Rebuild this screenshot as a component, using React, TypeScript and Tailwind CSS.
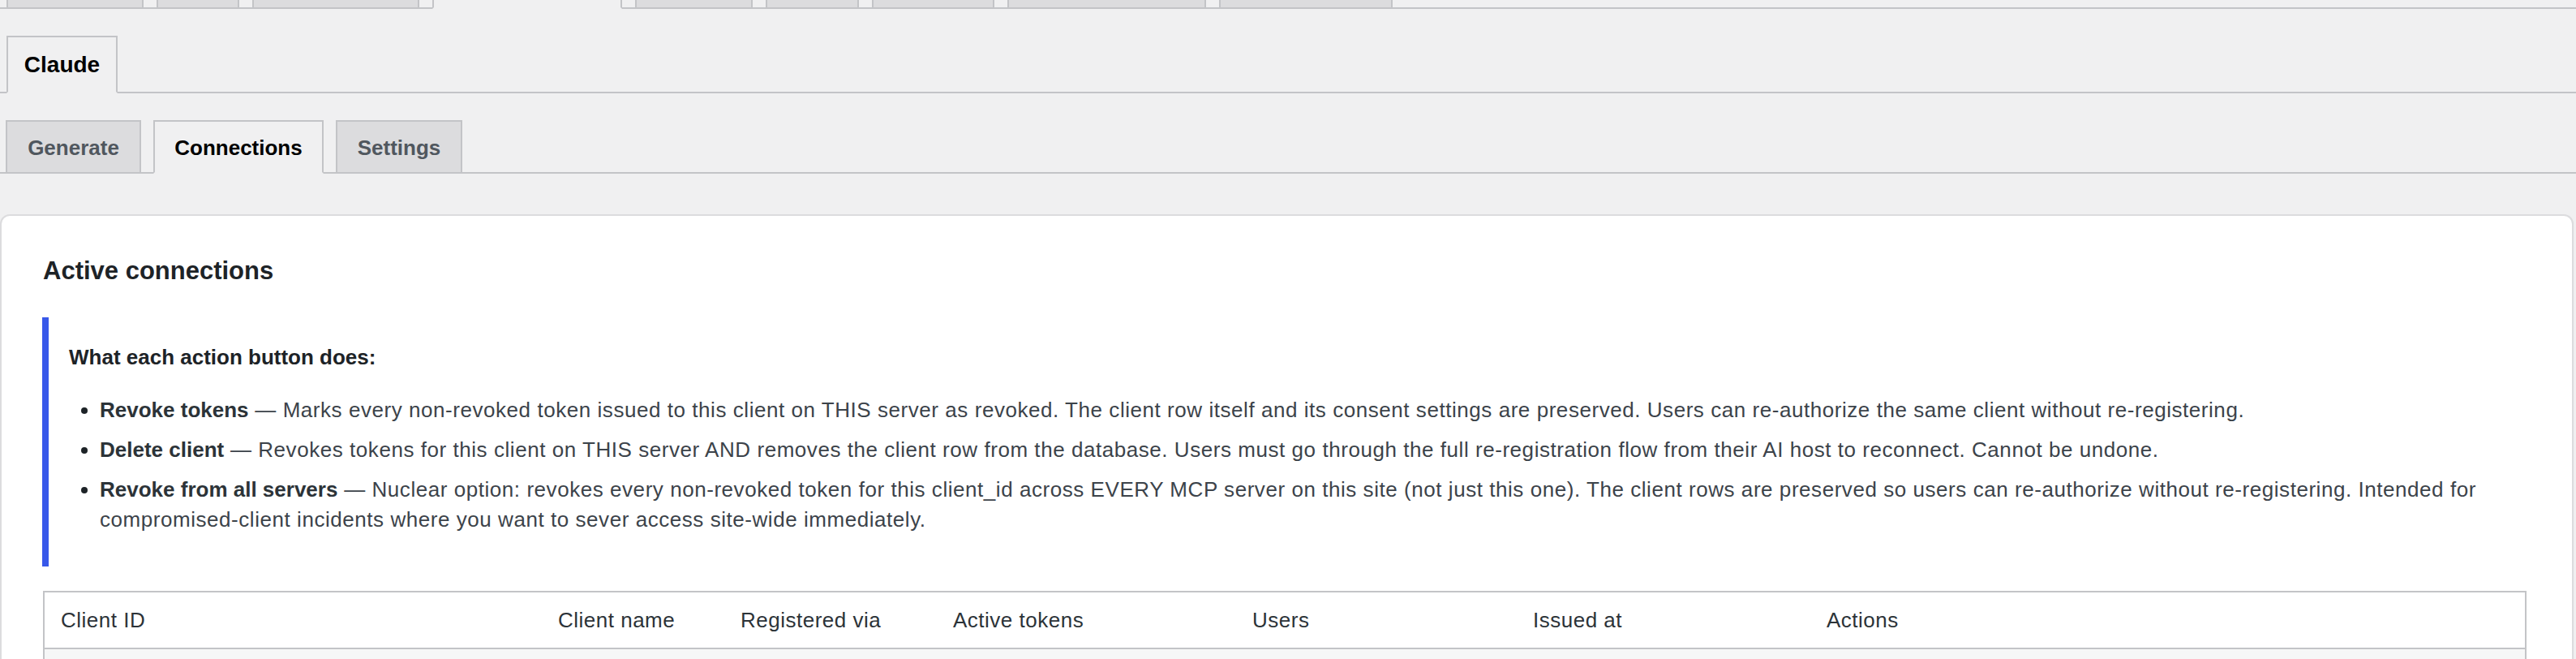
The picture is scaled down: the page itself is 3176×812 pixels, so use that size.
import React from "react";

// Top row of tabs is scrolled mostly out of view; only the bottom edges show
const topTabs = [
  { width: "w-[169px]", active: false },
  { width: "w-[102px]", active: false },
  { width: "w-[206px]", active: false },
  { width: "w-[234px]", active: true },
  { width: "w-[145px]", active: false },
  { width: "w-[115px]", active: false },
  { width: "w-[151px]", active: false },
  { width: "w-[245px]", active: false },
  { width: "w-[214px]", active: false },
];

const subTabs = [
  { label: "Generate", width: "w-[167px]", active: false },
  { label: "Connections", width: "w-[210px]", active: true },
  { label: "Settings", width: "w-[156px]", active: false },
];

const actions = [
  {
    name: "Revoke tokens",
    text: "Marks every non-revoked token issued to this client on THIS server as revoked. The client row itself and its consent settings are preserved. Users can re-authorize the same client without re-registering.",
  },
  {
    name: "Delete client",
    text: "Revokes tokens for this client on THIS server AND removes the client row from the database. Users must go through the full re-registration flow from their AI host to reconnect. Cannot be undone.",
  },
  {
    name: "Revoke from all servers",
    text: "Nuclear option: revokes every non-revoked token for this client_id across EVERY MCP server on this site (not just this one). The client rows are preserved so users can re-authorize without re-registering. Intended for compromised-client incidents where you want to sever access site-wide immediately.",
  },
];

const columns = [
  { label: "Client ID", width: "w-[614px]" },
  { label: "Client name", width: "w-[225px]" },
  { label: "Registered via", width: "w-[262px]" },
  { label: "Active tokens", width: "w-[369px]" },
  { label: "Users", width: "w-[346px]" },
  { label: "Issued at", width: "w-[362px]" },
  { label: "Actions", width: "" },
];

const App = () => {
  return (
    <div className="h-screen w-full overflow-hidden bg-[#f0f0f1] font-['Liberation_Sans',Arial,sans-serif] text-[#3c434a]">
      {/* top-level tab strip */}
      <div className="flex h-[11px] items-end gap-[16px] border-b-2 border-[#c3c4c7] pl-[8px]">
        {topTabs.map((tab, i) => (
          <div
            key={i}
            className={`-mb-[2px] h-[11px] border-x-2 border-b-2 ${tab.width} ${
              tab.active
                ? "border-[#c3c4c7] border-b-[#f0f0f1] bg-[#f0f0f1]"
                : "border-[#c3c4c7] bg-[#dcdcde]"
            }`}
          />
        ))}
      </div>

      {/* provider tabs */}
      <div className="flex items-end border-b-2 border-[#c3c4c7] pl-[8px] pt-[33px]">
        <div className="-mb-[2px] flex h-[71px] w-[137px] items-center justify-center border-2 border-[#c3c4c7] border-b-[#f0f0f1] bg-[#f0f0f1] text-[28px] font-bold text-black">
          Claude
        </div>
      </div>

      {/* section tabs */}
      <div className="flex items-end gap-[15px] border-b-2 border-[#c3c4c7] pl-[7px] pt-[33px]">
        {subTabs.map((tab) => (
          <div
            key={tab.label}
            className={`-mb-[2px] flex h-[66px] items-center justify-center border-2 border-[#c3c4c7] pt-[2px] text-[26px] font-bold ${tab.width} ${
              tab.active
                ? "border-b-[#f0f0f1] bg-[#f0f0f1] text-black"
                : "bg-[#dcdcde] text-[#50575e]"
            }`}
          >
            {tab.label}
          </div>
        ))}
      </div>

      <div className="mr-[3px] mt-[50px] rounded-[12px] border-2 border-[#dcdcde] bg-white pb-[60px] pl-[51px] pr-[56px] pt-[48px] shadow-[0_1px_2px_rgba(0,0,0,0.05)]">
        <h2 className="text-[31px] font-bold leading-[40px] text-[#1d2327]">Active connections</h2>

        <div className="-ml-[1px] mt-[37px] border-l-[8px] border-[#3858e9] pb-[39px] pl-[25px] pt-[31px] text-[26px] leading-[37px]">
          <p className="font-bold text-[#1d2327]">What each action button does:</p>
          <ul className="mt-[28px] list-disc space-y-[12px] pl-[38px] tracking-[0.55px] marker:text-[#1d2327]">
            {actions.map((action) => (
              <li key={action.name}>
                <strong className="font-bold tracking-normal text-[#2c3338]">{action.name}</strong> — {action.text}
              </li>
            ))}
          </ul>
        </div>

        <table className="mt-[30px] w-full table-fixed border-collapse border-2 border-[#c3c4c7] bg-white text-[26px]">
          <thead>
            <tr className="border-b-2 border-[#c3c4c7]">
              {columns.map((col) => (
                <th
                  key={col.label}
                  className={`h-[70px] px-[20px] text-left align-middle font-normal tracking-[0.5px] text-[#2c3338] ${col.width}`}
                >
                  {col.label}
                </th>
              ))}
            </tr>
          </thead>
          <tbody>
            <tr className="bg-[#f6f7f7]">
              {columns.map((col) => (
                <td key={col.label} className="h-[80px] px-[20px]" />
              ))}
            </tr>
          </tbody>
        </table>
      </div>
    </div>
  );
};

export default App;
